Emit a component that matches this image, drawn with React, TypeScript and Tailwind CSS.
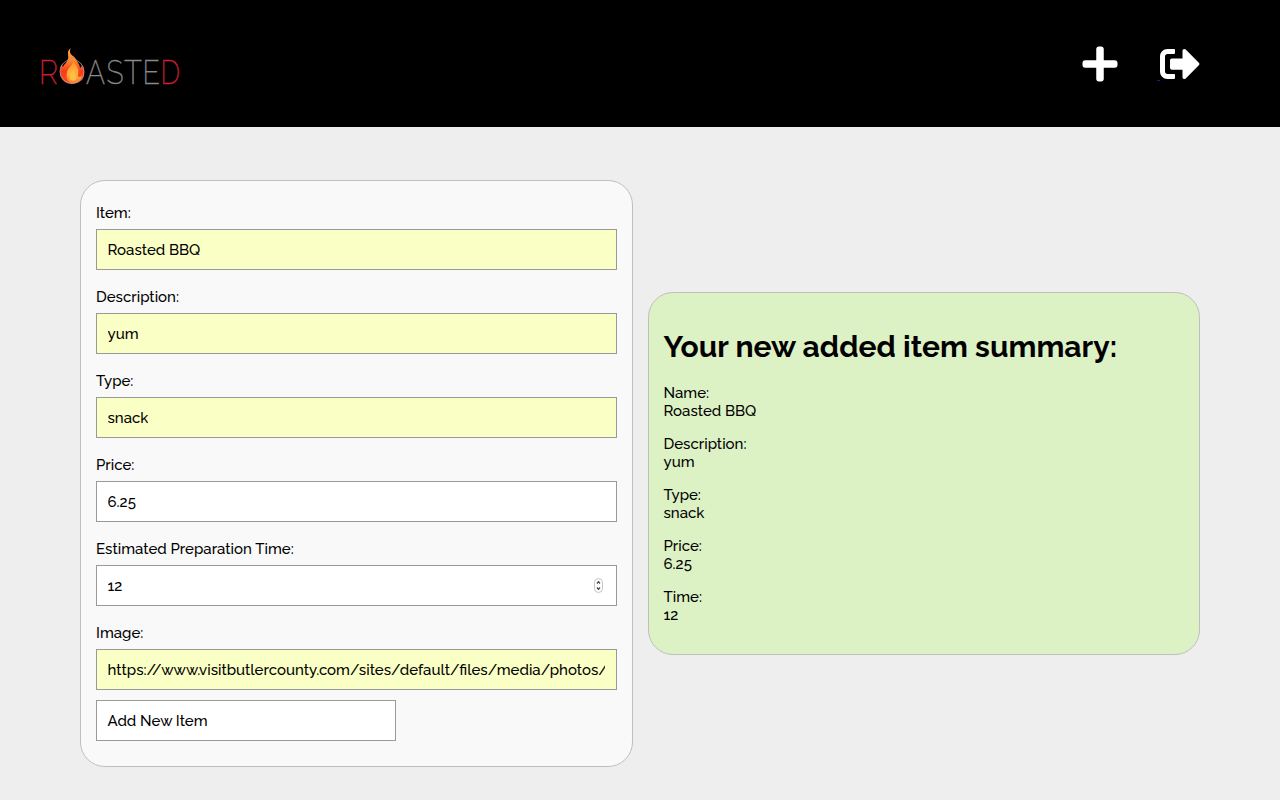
import type { ReactNode } from "react";
import { FaPlus, FaSignOutAlt } from "react-icons/fa";

function Logo() {
  return (
    <svg width="150" height="50" viewBox="-5 0 150 50" className="-ml-[5px]" aria-label="Roasted">
      <defs>
        <linearGradient id="flame" x1="0" y1="0" x2="0" y2="1">
          <stop offset="0" stopColor="#ffab40" />
          <stop offset="0.4" stopColor="#ff7a25" />
          <stop offset="0.65" stopColor="#fb3a1c" />
          <stop offset="1" stopColor="#fb4a20" />
        </linearGradient>
        <linearGradient id="core" x1="0" y1="0" x2="0" y2="1">
          <stop offset="0" stopColor="#ff9a30" />
          <stop offset="0.6" stopColor="#ffb13c" />
          <stop offset="1" stopColor="#ff7a28" />
        </linearGradient>
      </defs>
      <path
        d="M31 0C26 3 29 7 28 11C27 15 24 16 23 19C22 18 22 17 22 16C19 22 19 30 25 34C30 37 38 36 42 32C45 28 45 22 42 17C42 18 41 19 40 20C40 17 38 15 37 13C36 11 35 9 33 8C30 6 29 3 31 0Z"
        fill="url(#flame)"
      />
      <path
        d="M33 13C34 17 28 19 27 24C26 29 27 33 31 35C37 36 41 33 42 27C41 29 39 30 38 28C38 25 39 24 38 21C37 18 35 16 33 13Z"
        fill="url(#core)"
      />
      <path d="M34 20C33 24 28 27 30 31C32 34 37 33 37 29C35 28 34 24 34 20Z" fill="#ffbd45" />
      <circle cx="32" cy="23.500" r="12" fill="none" stroke="#aaa" strokeOpacity="0.75" strokeWidth="1" />
      <g fontFamily="Raleway, Lato, sans-serif" fontSize="34" fontWeight="200" strokeWidth="0.3">
        <text y="35.800" x="-1" fill="#cf2030" stroke="#cf2030" textLength="19" lengthAdjust="spacingAndGlyphs">R</text>
        <text y="35.800" x="46" fill="#8a8a8a" stroke="#8a8a8a" textLength="19" lengthAdjust="spacingAndGlyphs">A</text>
        <text y="35.800" x="66.500" fill="#8a8a8a" stroke="#8a8a8a" textLength="17" lengthAdjust="spacingAndGlyphs">S</text>
        <text y="35.800" x="84" fill="#8a8a8a" stroke="#8a8a8a" textLength="18" lengthAdjust="spacingAndGlyphs">T</text>
        <text y="35.800" x="102.500" fill="#8a8a8a" stroke="#8a8a8a" textLength="17.500" lengthAdjust="spacingAndGlyphs">E</text>
        <text y="35.800" x="120.500" fill="#cf2030" stroke="#cf2030" textLength="19.500" lengthAdjust="spacingAndGlyphs">D</text>
      </g>
    </svg>
  );
}

function Spinner() {
  return (
    <svg width="9" height="15" viewBox="0 0 9 15">
      <rect x="0.5" y="0.5" width="8" height="14" rx="4" fill="#fff" stroke="#c5c5c5" />
      <path d="M3 5.5 4.5 3.7 6 5.5M3 9.5 4.5 11.3 6 9.5" fill="none" stroke="#444" strokeWidth="1.3" />
    </svg>
  );
}

type FieldProps = { label: string; filled?: boolean; children: ReactNode; extra?: ReactNode };

function Field({ label, filled, children, extra }: FieldProps) {
  return (
    <div className="mb-[10px]">
      <div className="flex h-[33px] items-center">{label}</div>
      <div
        className={`flex h-[41px] items-center justify-between border border-[#999] pr-[11px] pl-[10.5px] ${
          filled ? "bg-[#faffc5]" : "bg-white"
        }`}
      >
        <div className="overflow-hidden whitespace-nowrap">{children}</div>
        {extra}
      </div>
    </div>
  );
}

const summary = [
  ["Name:", "Roasted BBQ"],
  ["Description:", "yum"],
  ["Type:", "snack"],
  ["Price:", "6.25"],
  ["Time:", "12"],
];

export default function App() {
  return (
    <div className="h-[800px] w-[1280px] overflow-hidden bg-[#eee] font-[Raleway,Lato,sans-serif] text-[15px] leading-[18px] font-medium text-black">
      <header className="flex h-[127px] items-start justify-between bg-black pt-[44px] pr-20 pl-10">
        <div className="pt-1">
          <Logo />
        </div>
        <nav className="flex items-start text-white">
          <FaPlus className="mr-[37px] h-10 w-[40px]" />
          <span className="mt-9 h-px w-[3px] bg-[#3b1078]" />
          <FaSignOutAlt className="h-10 w-10" />
        </nav>
      </header>
      <main className="flex items-center gap-[15px] pt-[53px] pl-20">
        <section className="h-[587px] w-[553px] rounded-[25px] border border-[#bfbfbf] bg-[#f9f9f9] px-[15px] pt-[15px]">
          <Field label="Item:" filled>Roasted BBQ</Field>
          <Field label="Description:" filled>yum</Field>
          <Field label="Type:" filled>snack</Field>
          <Field label="Price:">6.25</Field>
          <Field label="Estimated Preparation Time:" extra={<span className="mr-[2px]"><Spinner /></span>}>12</Field>
          <Field label="Image:" filled>https://www.visitbutlercounty.com/sites/default/files/media/photos/</Field>
          <div className="flex h-[41px] w-[300px] items-center border border-[#999] bg-white px-[10.5px]">Add New Item</div>
        </section>
        <section className="h-[363px] w-[552px] rounded-[25px] border border-[#bfbfbf] bg-[#dcf1c4] px-[14.5px] pt-[36px]">
          <h1 className="mb-[19px] text-[30px] leading-9 font-bold">Your new added item summary:</h1>
          {summary.map(([name, value]) => (
            <p key={name} className="mb-[15px]">
              {name}
              <br />
              {value}
            </p>
          ))}
        </section>
      </main>
    </div>
  );
}
